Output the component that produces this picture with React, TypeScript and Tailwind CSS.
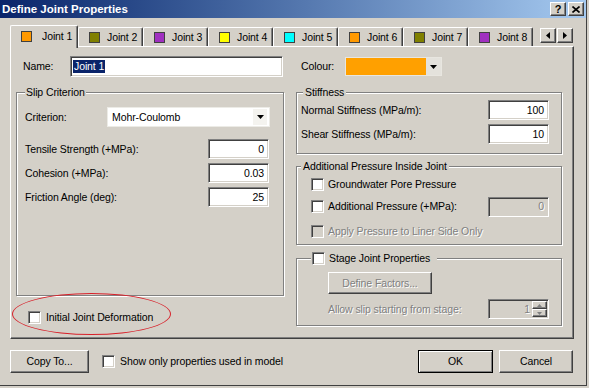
import React from "react";

const raised =
  "bg-[#d4d0c8] border border-t-white border-l-white border-r-[#404040] border-b-[#404040] shadow-[inset_-1px_-1px_0_#808080]";
const sunken =
  "border border-t-[#808080] border-l-[#808080] border-r-white border-b-white shadow-[inset_1px_1px_0_#404040,inset_-1px_-1px_0_#d4d0c8]";
const grey = "text-[#808080] [text-shadow:1px_1px_0_#fff]";

const tabs = [
  { name: "Joint 1", color: "#ff9900" },
  { name: "Joint 2", color: "#808000" },
  { name: "Joint 3", color: "#a030c0" },
  { name: "Joint 4", color: "#ffff00" },
  { name: "Joint 5", color: "#00ffff" },
  { name: "Joint 6", color: "#ff9900" },
  { name: "Joint 7", color: "#808000" },
  { name: "Joint 8", color: "#a030c0" },
];

function Check({ disabled }: { disabled?: boolean }) {
  return (
    <span
      className={`block w-[13px] h-[13px] shrink-0 ${sunken} ${
        disabled ? "bg-[#d4d0c8]" : "bg-white"
      }`}
    />
  );
}

function DownArrow() {
  return (
    <svg width="7" height="4" viewBox="0 0 7 4">
      <polygon points="0,0 7,0 3.5,4" fill="#000" />
    </svg>
  );
}

function NumBox({ value, disabled }: { value: string; disabled?: boolean }) {
  return (
    <div
      className={`w-[61px] h-[20px] shrink-0 flex items-center justify-end pr-[4px] ${sunken} ${
        disabled ? "bg-[#d4d0c8] " + grey : "bg-white"
      }`}
    >
      {value}
    </div>
  );
}

function Group({
  legend,
  className,
  children,
}: {
  legend: React.ReactNode;
  className?: string;
  children?: React.ReactNode;
}) {
  return (
    <fieldset
      className={`border border-[#808080] shadow-[inset_1px_1px_0_#fff,1px_1px_0_#fff] ${className ?? ""}`}
    >
      {legend}
      {children}
    </fieldset>
  );
}

export default function App() {
  return (
    <div className="w-[589px] h-[388px] bg-[#d4d0c8] relative overflow-hidden text-[10.5px] tracking-[-0.1px] leading-[13px] text-black font-['Liberation_Sans',Arial,sans-serif]">
      <div className="w-[587px] h-[386px] border-r border-b border-[#404040] flex flex-col">
        {/* Title bar */}
        <div className="h-[18px] flex items-center justify-between bg-linear-to-r from-[#0a246a] to-[#a6caf0] pl-[2px] pr-[2px]">
          <span className="text-white font-bold text-[11.5px] tracking-normal">Define Joint Properties</span>
          <div className="flex gap-[2px]">
            <div className={`w-[16px] h-[14px] flex items-center justify-center font-bold text-[11px] ${raised}`}>
              ?
            </div>
            <div className={`w-[16px] h-[14px] flex items-center justify-center ${raised}`}>
              <svg width="8" height="7" viewBox="0 0 8 7">
                <path d="M0.5 0.5 L7.5 6.5 M7.5 0.5 L0.5 6.5" stroke="#000" strokeWidth="1.6" />
              </svg>
            </div>
          </div>
        </div>

        <div className="pl-[10px] pt-[7px] flex flex-col">
          {/* Tabs */}
          <div className="flex items-end h-[21px]">
            {tabs.map((t, i) =>
              i === 0 ? (
                <div
                  key={t.name}
                  className="relative z-10 -mb-[2px] h-[23px] w-[68px] shrink-0 flex items-center pl-[10px] gap-[10px] pb-[2px] bg-[#d4d0c8] border-t border-l border-r border-t-white border-l-white border-r-[#404040] shadow-[inset_-1px_0_0_#808080] rounded-t-[2px]"
                >
                  <span className="w-[11px] h-[11px] border border-[#404040]" style={{ backgroundColor: t.color }} />
                  <span>{t.name}</span>
                </div>
              ) : (
                <div
                  key={t.name}
                  className="h-[19px] w-[65px] shrink-0 flex items-center pl-[10px] gap-[7px] border-t border-l border-r border-t-white border-l-white border-r-[#404040] shadow-[inset_-1px_0_0_#808080] rounded-t-[2px]"
                >
                  <span className="w-[11px] h-[11px] border border-[#404040]" style={{ backgroundColor: t.color }} />
                  <span>{t.name}</span>
                </div>
              )
            )}
            <div className="self-start mt-[3px] ml-[7px] flex gap-px">
              <div className={`w-[16px] h-[15px] flex items-center justify-center ${raised}`}>
                <svg width="4" height="7" viewBox="0 0 4 7">
                  <polygon points="4,0 4,7 0,3.5" fill="#000" />
                </svg>
              </div>
              <div className={`w-[16px] h-[15px] flex items-center justify-center ${raised}`}>
                <svg width="4" height="7" viewBox="0 0 4 7">
                  <polygon points="0,0 0,7 4,3.5" fill="#000" />
                </svg>
              </div>
            </div>
          </div>

          {/* Tab panel */}
          <div className={`w-[564px] h-[293px] pl-[5px] pt-[9px] flex flex-col ${raised}`}>
            {/* Name / Colour row */}
            <div className="h-[21px] ml-[7px] flex items-center">
              <span className="w-[47px]">Name:</span>
              <div className={`w-[213px] h-[21px] bg-white flex items-center pl-[2px] ${sunken}`}>
                <span className="bg-[#0a246a] text-white px-px">Joint 1</span>
              </div>
              <span className="ml-[18px] w-[44px]">Colour:</span>
              <div className="flex h-[19px] border border-[#e8e6e0]">
                <div className="w-[80px] bg-[#ffa000]" />
                <div className="w-[15px] bg-[#e4e2dc] flex items-center justify-center">
                  <DownArrow />
                </div>
              </div>
            </div>

            {/* Groups */}
            <div className="flex mt-[8px]">
              {/* Left column */}
              <div className="w-[268px] flex flex-col">
                <Group
                  className="h-[211px] pl-[8px]"
                  legend={
                    <legend className="ml-[0px] px-[1px] leading-[14px] bg-[#d4d0c8]">Slip Criterion</legend>
                  }
                >
                  <div className="mt-[8px] h-[20px] flex items-center">
                    <span className="w-[82px]">Criterion:</span>
                    <div className="w-[163px] h-[20px] bg-white flex items-center justify-between pl-[4px] pr-[2px] border border-[#ecebe6]">
                      <span>Mohr-Coulomb</span>
                      <div className="w-[14px] h-[16px] flex items-center justify-center bg-[#f4f3ef]">
                        <DownArrow />
                      </div>
                    </div>
                  </div>
                  <div className="mt-[12px] flex flex-col gap-[4px]">
                    <div className="h-[20px] flex items-center">
                      <span className="w-[183px]">Tensile Strength (+MPa):</span>
                      <NumBox value="0" />
                    </div>
                    <div className="h-[20px] flex items-center">
                      <span className="w-[183px]">Cohesion (+MPa):</span>
                      <NumBox value="0.03" />
                    </div>
                    <div className="h-[20px] flex items-center">
                      <span className="w-[183px]">Friction Angle (deg):</span>
                      <NumBox value="25" />
                    </div>
                  </div>
                </Group>
                <div className="mt-[15px] ml-[12px] flex items-center gap-[5px]">
                  <Check />
                  <span>Initial Joint Deformation</span>
                </div>
              </div>

              {/* Right column */}
              <div className="w-[266px] ml-[12px] flex flex-col">
                <Group
                  className="h-[69px] pl-[4px] pr-[12px]"
                  legend={<legend className="ml-[2px] px-[2px] leading-[14px] bg-[#d4d0c8]">Stiffness</legend>}
                >
                  <div className="mt-[1px] flex flex-col gap-[4px]">
                    <div className="h-[20px] flex items-center justify-between">
                      <span>Normal Stiffness (MPa/m):</span>
                      <NumBox value="100" />
                    </div>
                    <div className="h-[20px] flex items-center justify-between">
                      <span>Shear Stiffness (MPa/m):</span>
                      <NumBox value="10" />
                    </div>
                  </div>
                </Group>

                <Group
                  className="mt-[5px] h-[86px] pl-[14px] pr-[12px]"
                  legend={
                    <legend className="-ml-[10px] px-[2px] leading-[14px] bg-[#d4d0c8]">
                      Additional Pressure Inside Joint
                    </legend>
                  }
                >
                  <div className="mt-[5px] h-[13px] flex items-center gap-[4px]">
                    <Check />
                    <span>Groundwater Pore Pressure</span>
                  </div>
                  <div className="mt-[5px] h-[21px] flex items-center">
                    <Check />
                    <span className="ml-[4px] flex-1">Additional Pressure (+MPa):</span>
                    <NumBox value="0" disabled />
                  </div>
                  <div className="mt-[8px] h-[13px] flex items-center gap-[4px]">
                    <Check disabled />
                    <span className={grey}>Apply Pressure to Liner Side Only</span>
                  </div>
                </Group>

                <Group
                  className="mt-[6px] h-[75px] pl-[31px] pr-[12px]"
                  legend={
                    <legend className="-ml-[17px] pl-[1px] pr-[7px] leading-[14px] bg-[#d4d0c8]">
                      <span className="flex items-center gap-[4px]">
                        <Check />
                        <span>Stage Joint Properties</span>
                      </span>
                    </legend>
                  }
                >
                  <div
                    className={`mt-[7px] w-[104px] h-[22px] flex items-center justify-center ${raised} ${grey}`}
                  >
                    Define Factors...
                  </div>
                  <div className="mt-[5px] h-[20px] flex items-center justify-between">
                    <span className={grey}>Allow slip starting from stage:</span>
                    <div className={`w-[61px] h-[20px] flex items-center justify-end bg-[#d4d0c8] ${sunken}`}>
                      <span className={`${grey} mr-[2px]`}>1</span>
                      <div className="flex flex-col w-[15px] h-[16px] mr-px">
                        <div className={`h-[8px] flex items-center justify-center ${raised}`}>
                          <svg width="5" height="3" viewBox="0 0 5 3">
                            <polygon points="0,3 5,3 2.5,0" fill="#808080" />
                          </svg>
                        </div>
                        <div className={`h-[8px] flex items-center justify-center ${raised}`}>
                          <svg width="5" height="3" viewBox="0 0 5 3">
                            <polygon points="0,0 5,0 2.5,3" fill="#808080" />
                          </svg>
                        </div>
                      </div>
                    </div>
                  </div>
                </Group>
              </div>
            </div>
          </div>

          {/* Bottom buttons */}
          <div className="mt-[11px] w-[563px] h-[23px] flex items-center">
            <div className={`w-[79px] h-[23px] flex items-center justify-center ${raised}`}>Copy To...</div>
            <div className="ml-[13px] flex items-center gap-[5px]">
              <Check />
              <span>Show only properties used in model</span>
            </div>
            <div
              className={`ml-auto w-[75px] h-[23px] flex items-center justify-center bg-[#d4d0c8] border border-black shadow-[inset_1px_1px_0_#fff,inset_-1px_-1px_0_#808080]`}
            >
              OK
            </div>
            <div className={`ml-[6px] w-[74px] h-[23px] flex items-center justify-center ${raised}`}>Cancel</div>
          </div>
        </div>
      </div>

      {/* red annotation ellipse */}
      <div className="absolute left-[12px] top-[293px] w-[159px] h-[42px] border border-[#d8202a] rounded-[50%]" />
    </div>
  );
}
